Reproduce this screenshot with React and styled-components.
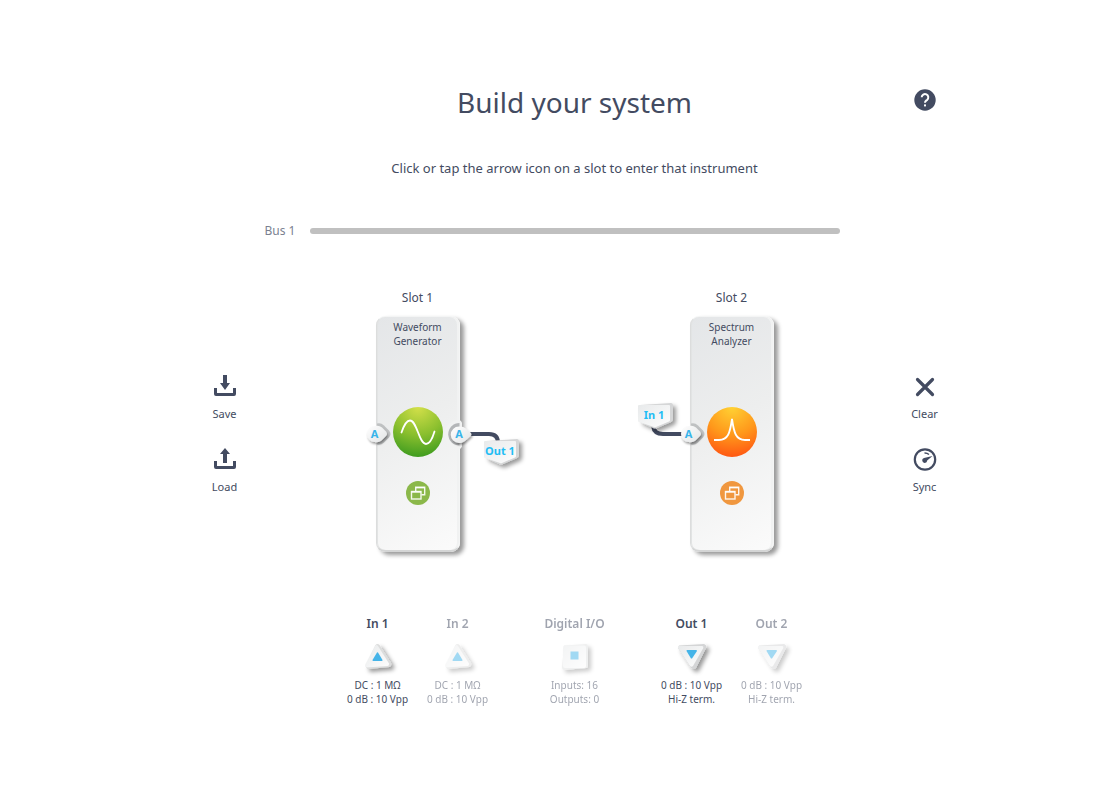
import React from "react";
import styled, { createGlobalStyle, css } from "styled-components";

const INK = "#434b61";

const GlobalStyle = createGlobalStyle`
  * { box-sizing: border-box; }
  body {
    margin: 0;
    background: #fff;
    color: ${INK};
    font-family: "Noto Sans", "Open Sans", sans-serif;
    font-size: 12px;
  }
`;

const bareButton = css`
  padding: 0;
  border: 0;
  background: none;
  color: inherit;
  font: inherit;
  cursor: pointer;
`;

const Page = styled.main`
  max-width: 760px;
  margin: 0 auto;
  padding: 80px 0 40px;
`;

const Shell = styled.div`
  padding-left: 43px;
`;

const Header = styled.header`
  display: grid;
  grid-template-columns: 60px 1fr 60px;
  text-align: center;
`;

const Title = styled.h1`
  grid-column: 2;
  margin: 0;
  font-size: 28px;
  line-height: 44px;
  font-weight: 400;
`;

const HelpButton = styled.button`
  ${bareButton}
  height: 40px;
  display: flex;
  align-items: center;
  justify-content: center;
`;

const Hint = styled.p`
  grid-column: 1 / -1;
  margin: 34px 0 0;
  font-size: 13px;
  line-height: 20px;
`;

const Bus = styled.div`
  display: grid;
  grid-template-columns: 45px 1fr;
  align-items: center;
  margin-top: 44px;
  padding: 0 115px 0 70px;
  line-height: 18px;
  color: #7b8190;
`;

const BusBar = styled.div`
  height: 6px;
  border-radius: 3px;
  background: #c0c0c0;
`;

const Workspace = styled.div`
  display: grid;
  grid-template-columns: 60px 1fr 60px;
  margin-top: 49px;
`;

const Tools = styled.nav`
  display: flex;
  flex-direction: column;
  gap: 24px;
  padding-top: 85px;
`;

const Tool = styled.button`
  ${bareButton}
  display: flex;
  flex-direction: column;
  align-items: center;
  gap: 7px;
  font-size: 11px;
  line-height: 18px;
`;

const Slots = styled.div`
  display: grid;
  grid-template-columns: 1fr 1fr;
  padding: 0 6px;
`;

const Slot = styled.section`
  display: flex;
  flex-direction: column;
  align-items: center;
`;

const SlotName = styled.h2`
  margin: 0;
  font-size: 12px;
  line-height: 18px;
  font-weight: 400;
`;

const Card = styled.div`
  position: relative;
  display: flex;
  flex-direction: column;
  align-items: center;
  width: 84px;
  height: 236px;
  margin-top: 9px;
  padding-top: 3px;
  border: 1px solid #f4f5f5;
  border-left-color: #dcdddd;
  border-bottom: 2px solid #d4d5d5;
  border-radius: 9px;
  background: linear-gradient(150deg, #e4e6e8 0%, #edeeee 45%, #fbfbfb 100%);
  box-shadow: inset 1px 0 0 #e2e4e4, inset -2px 0 0 #f1f2f2, 4px 3px 4px rgba(0, 0, 0, 0.4);
`;

const Instrument = styled.div`
  height: 28px;
  font-size: 10px;
  line-height: 14px;
  text-align: center;
`;

const Disc = styled.div`
  width: 50px;
  height: 50px;
  margin-top: 59px;
  border-radius: 50%;
  background: ${(p) => p.$fill};
`;

const OpenButton = styled.button`
  ${bareButton}
  width: 24px;
  height: 24px;
  margin-top: 24px;
  border-radius: 50%;
  background: ${(p) => p.$color};
`;

const Badge = styled.button`
  ${bareButton}
  position: absolute;
  left: ${(p) => p.$x}px;
  top: ${(p) => p.$y}px;
  width: ${(p) => p.$w}px;
  height: 24px;
  color: ${(p) => p.$color};
  font-size: 11px;
  font-weight: 700;
`;

const BadgeArt = styled.svg`
  position: absolute;
  left: 0;
  top: 0;
  overflow: visible;
`;

const BadgeText = styled.span`
  position: relative;
  display: block;
  width: ${(p) => p.$w}px;
  line-height: 22px;
  text-align: center;
`;

const Wire = styled.svg`
  position: absolute;
  left: ${(p) => p.$x}px;
  top: ${(p) => p.$y}px;
`;

const Ports = styled.footer`
  display: flex;
  justify-content: center;
  gap: 37px;
  margin-top: 62px;
`;

const PortGroup = styled.div`
  display: flex;
`;

const Port = styled.button`
  ${bareButton}
  width: 80px;
  opacity: ${(p) => (p.$muted ? 0.5 : 1)};
  white-space: nowrap;
  svg { display: block; margin: 9px auto 7px; overflow: visible; }
`;

const PortName = styled.strong`
  display: block;
  font-size: 12px;
  line-height: 20px;
  font-weight: 600;
`;

const PortInfo = styled.span`
  display: block;
  font-size: 10px;
  line-height: 14px;
`;

const HiddenDefs = styled.svg`
  position: absolute;
`;

function Defs() {
  return (
    <HiddenDefs width="0" height="0" aria-hidden="true">
      <defs>
        <linearGradient id="plate" x1="0" y1="0" x2="1" y2="1">
          <stop offset="0" stopColor="#e8eaeb" />
          <stop offset="1" stopColor="#fdfdfd" />
        </linearGradient>
        <linearGradient id="knob" x1="0" y1="0" x2="1" y2="1">
          <stop offset="0" stopColor="#ffffff" />
          <stop offset="1" stopColor="#e2e4e5" />
        </linearGradient>
        <filter id="cast" x="-50%" y="-50%" width="200%" height="200%">
          <feDropShadow dx="3" dy="3" stdDeviation="2" floodColor="#000" floodOpacity="0.4" />
        </filter>
        <filter id="near" x="-50%" y="-50%" width="200%" height="200%">
          <feDropShadow dx="1" dy="2" stdDeviation="1" floodColor="#000" floodOpacity="0.38" />
        </filter>
      </defs>
    </HiddenDefs>
  );
}

function SaveIcon({ up }) {
  return (
    <svg width="24" height="24" viewBox="0 0 24 24" fill={INK}>
      <path d="M1 14h3v5h16v-5h3v6a2 2 0 0 1-2 2H3a2 2 0 0 1-2-2z" />
      {up ? <path d="M12 1l5 6h-3v9h-4V7H7z" /> : <path d="M10 1h4v8h3l-5 7-5-7h3z" />}
    </svg>
  );
}

function ClearIcon() {
  return (
    <svg width="24" height="24" viewBox="0 0 24 24" fill="none" stroke={INK} strokeWidth="3.200" strokeLinecap="round">
      <path d="M4.500 5.500l15 15M19.500 5.500L4.500 20.500" />
    </svg>
  );
}

function SyncIcon() {
  return (
    <svg width="24" height="24" viewBox="0 0 24 24" fill="none" stroke={INK}>
      <circle cx="12" cy="12.500" r="10.200" strokeWidth="2.200" />
      <path d="M11.500 6a6.500 6.500 0 0 1 4.500 1.500" strokeWidth="1.500" />
      <path d="M19.500 9l-5.300 4.500a2.500 2.500 0 1 1-3.200-2.500z" fill={INK} stroke="none" />
    </svg>
  );
}

function HelpIcon() {
  return (
    <svg width="22" height="22" viewBox="0 0 22 22">
      <circle cx="11" cy="11" r="10.700" fill={INK} />
      <path d="M7.700 8.300a3.300 3.300 0 1 1 5.400 2.600c-1.200 1-2.100 1.300-2.100 2.900" fill="none" stroke="#fff" strokeWidth="2" />
      <rect x="10" y="15.400" width="2" height="2" fill="#fff" />
    </svg>
  );
}

function WindowsIcon() {
  return (
    <svg width="24" height="24" viewBox="0 0 24 24" fill="none" stroke="#fff" strokeOpacity="0.900" strokeWidth="1.400">
      <path d="M9.700 10V6.200h9v7.500h-3.200" />
      <path d="M9.700 6.700h9" />
      <rect x="5.500" y="10.500" width="9.500" height="7.500" />
      <path d="M5.500 11h9.500" />
    </svg>
  );
}

function InPort() {
  return (
    <Badge $x={-11} $y={105} $w={26} $color="#38b4ea" aria-label="Input A">
      <BadgeArt width="26" height="24">
        <path d="M11 1.500q4-1 7 2l5 5q3 3.500 0 7l-5 5q-3 3-7 2z" fill="#bfc1c2" />
        <path d="M9 4q4-1 7 1.500l4 4q2 2.500 0 4.500L15.500 18.500q-3 2.500-6.500 1.500a8 8 0 0 1 0-16z" fill="url(#knob)" filter="url(#near)" />
      </BadgeArt>
      <BadgeText $w={18}>A</BadgeText>
    </Badge>
  );
}

function OutPort() {
  return (
    <Badge $x={70} $y={105} $w={26} $color="#38b4ea" aria-label="Output A">
      <BadgeArt width="26" height="24">
        <path d="M12 -2q2 0 3 2.500l0 24q-1 2.500-3 2.500a14 14 0 0 1 0-29z" fill="#f1f2f2" />
        <path d="M12.500 1a11.200 11.200 0 0 0 0 22.500z" fill="#b4b6b8" />
        <path d="M12 4.500q4-.500 7 2l4 3.500q3 2.500 0 4.500l-5 4.500q-3 2.500-6 2a8 8 0 0 1 0-16.500z" fill="url(#knob)" filter="url(#near)" />
      </BadgeArt>
      <BadgeText $w={25}>A</BadgeText>
    </Badge>
  );
}

function Tag({ x, y, children }) {
  return (
    <Badge $x={x} $y={y} $w={36} $color="#1fbdf5">
      <BadgeArt width="36" height="26">
        <g filter="url(#cast)">
          <path d="M1 3q0-1 1-1L33 0q2 0 2 2v14q0 2-2 3L19 25q-2 1-4 0L2 19z" fill="#d5d6d7" />
        </g>
        <path d="M0 3q0-1 1-1h30q1 0 1 1v14q0 1-1 1.500L18 24q-1 .500-2 0L1 19q-1 0-1-1.500z" fill="url(#plate)" />
      </BadgeArt>
      <BadgeText $w={33}>{children}</BadgeText>
    </Badge>
  );
}

function PortShape({ kind }) {
  return (
    <svg width="32" height="28" viewBox="0 0 32 28">
      {kind === "in" && (
        <>
          <path d="M13.500 2q2-2 4 0L29 20q1 3-2 4L6 26q-3-1-2-4z" fill="#dcdddd" filter="url(#cast)" />
          <path d="M13 3q1.500-2 3 0l11 17.500q.500 2-1.500 2.500L4.500 24.500q-2-.500-1.500-2.500z" fill="url(#plate)" />
          <path d="M15 9.500q.500-.500 1 0l4.500 7.500q0 1-.500 1h-9q-.500 0-.500-1z" fill="#45b4e8" />
        </>
      )}
      {kind === "out" && (
        <>
          <path d="M3 2.500L28 1q3 1 2 4L20 25q-2 2-5 0L2 5z" fill="#d4d5d6" filter="url(#cast)" />
          <path d="M3 3h23q2 0 1 2.500L17 23q-1.500 1.500-3 0L2 5q-.500-1.500 1-2z" fill="url(#plate)" />
          <path d="M11 7h9q1 0 1 1l-5 7.500h-1L10.500 8q0-1 .500-1z" fill="#45b4e8" />
        </>
      )}
      {kind === "io" && (
        <>
          <path d="M5 2.500L27 1q2 0 2 2v20q0 2-2 2L5 27q-2 0-2-3z" fill="#e1e2e2" filter="url(#cast)" />
          <rect x="4" y="2.500" width="23" height="22.500" rx="2" fill="url(#plate)" />
          <rect x="11.500" y="8.500" width="8" height="8" fill="#45b4e8" />
        </>
      )}
    </svg>
  );
}

function SystemPort({ name, kind, muted, lines }) {
  return (
    <Port $muted={muted}>
      <PortName>{name}</PortName>
      <PortShape kind={kind} />
      {lines.map((line) => (
        <PortInfo key={line}>{line}</PortInfo>
      ))}
    </Port>
  );
}

export default function App() {
  return (
    <Shell>
      <GlobalStyle />
      <Defs />
      <Page>
        <Header>
          <Title>Build your system</Title>
          <HelpButton aria-label="Help"><HelpIcon /></HelpButton>
          <Hint>Click or tap the arrow icon on a slot to enter that instrument</Hint>
        </Header>

        <Bus>
          <span>Bus 1</span>
          <BusBar />
        </Bus>

        <Workspace>
          <Tools aria-label="Configuration">
            <Tool><SaveIcon />Save</Tool>
            <Tool><SaveIcon up />Load</Tool>
          </Tools>

          <Slots>
            <Slot>
              <SlotName>Slot 1</SlotName>
              <Card>
                <Instrument>Waveform<br />Generator</Instrument>
                <Disc $fill="radial-gradient(circle at 50% 0%, #d4e04a 0%, #8abf2e 50%, #2c931c 100%)">
                  <svg width="50" height="50" viewBox="0 0 50 50" fill="none" stroke="#fff" strokeWidth="1.800" strokeLinecap="round">
                    <path d="M8.500 25.500C11 18 14 13.500 17 13.500C24 13.500 26 37 33 37C36.500 37 39 33 41.500 24.500" />
                  </svg>
                </Disc>
                <OpenButton $color="#8bb84a" aria-label="Open Waveform Generator"><WindowsIcon /></OpenButton>
                <Wire $x={90} $y={114} width="36" height="14" fill="none" stroke={INK} strokeWidth="4">
                  <path d="M0 3h22q9 0 9 9v2" />
                </Wire>
                <InPort />
                <OutPort />
                <Tag x={107} y={122}>Out 1</Tag>
              </Card>
            </Slot>
            <Slot>
              <SlotName>Slot 2</SlotName>
              <Card>
                <Instrument>Spectrum<br />Analyzer</Instrument>
                <Disc $fill="radial-gradient(circle at 50% 0%, #ffd233 0%, #ff981b 50%, #ff4710 100%)">
                  <svg width="50" height="50" viewBox="0 0 50 50" fill="none" stroke="#fff" strokeWidth="1.800">
                    <path d="M7 33h5C21 33 23 26 25 12C27 26 29 33 38 33h5" />
                  </svg>
                </Disc>
                <OpenButton $color="#f0973f" aria-label="Open Spectrum Analyzer"><WindowsIcon /></OpenButton>
                <Wire $x={-42} $y={107} width="36" height="14" fill="none" stroke={INK} strokeWidth="4">
                  <path d="M4 0v2q1 8 10 8h20" />
                </Wire>
                <InPort />
                <Tag x={-53} y={86}>In 1</Tag>
              </Card>
            </Slot>
          </Slots>

          <Tools aria-label="System">
            <Tool><ClearIcon />Clear</Tool>
            <Tool><SyncIcon />Sync</Tool>
          </Tools>
        </Workspace>

        <Ports>
          <PortGroup>
            <SystemPort name="In 1" kind="in" lines={["DC : 1 MΩ", "0 dB : 10 Vpp"]} />
            <SystemPort name="In 2" kind="in" muted lines={["DC : 1 MΩ", "0 dB : 10 Vpp"]} />
          </PortGroup>
          <SystemPort name="Digital I/O" kind="io" muted lines={["Inputs: 16", "Outputs: 0"]} />
          <PortGroup>
            <SystemPort name="Out 1" kind="out" lines={["0 dB : 10 Vpp", "Hi-Z term."]} />
            <SystemPort name="Out 2" kind="out" muted lines={["0 dB : 10 Vpp", "Hi-Z term."]} />
          </PortGroup>
        </Ports>
      </Page>
    </Shell>
  );
}
